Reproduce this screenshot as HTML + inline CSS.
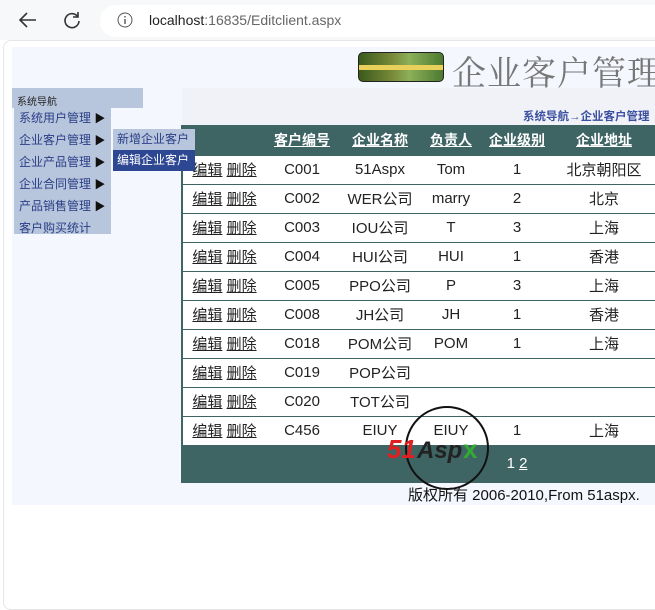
<!DOCTYPE html>
<html><head><meta charset="utf-8"><style>
*{margin:0;padding:0;box-sizing:border-box}
body{width:655px;height:603px;overflow:hidden;background:#fff;font-family:"Liberation Sans","Noto Sans CJK SC",sans-serif;position:relative}
.bar{position:absolute;left:0;top:0;width:655px;height:40px;background:#f7f8fa}
.url{position:absolute;left:100px;top:5px;width:570px;height:32px;border-radius:16px;background:#fff}
.frame{position:absolute;left:3px;top:40px;width:660px;height:570px;background:#fff;border:1px solid #e6e6e6;border-radius:8px}
.page{position:absolute;left:12px;top:47px;width:650px;height:458px;background:#f5f7fe}
.abs{position:absolute}
.nav{background:#b8c6dd;font-size:12px;color:#2a3e86;white-space:nowrap}
.z{z-index:5}
table{position:absolute;left:181px;top:125px;border-collapse:collapse;width:480px;background:#fff;border-left:2px solid #3f6464}
td,th{height:29px;text-align:center;font-size:15px;color:#222;border-bottom:1px solid #3f6464;white-space:nowrap}
th{background:#3f6464;color:#fff;text-decoration:underline;height:30px;font-size:14px}
td u{color:#222}
.ar{color:#111;font-size:11px}
</style></head><body>
<div class="bar">
<svg class="abs" style="left:18px;top:11px" width="20" height="18"><path d="M18 9H3M9 2L2 9l7 7" stroke="#333" stroke-width="1.6" fill="none"/></svg>
<svg class="abs" style="left:62px;top:10px" width="20" height="20"><path d="M16 7A7 7 0 1 0 17 11M16 2v5h-5" stroke="#333" stroke-width="1.6" fill="none"/></svg>
<div class="url"></div>
<svg class="abs" style="left:117px;top:12px" width="16" height="16"><circle cx="8" cy="8" r="7" stroke="#555" fill="none"/><path d="M8 7v5M8 4v1.5" stroke="#555" stroke-width="1.4"/></svg>
<div class="abs" style="left:149px;top:12px;font-size:14px;color:#222">localhost<span style="color:#666">:16835/Editclient.aspx</span></div>
</div>
<div class="frame"></div>
<div class="page"></div>
<div class="abs" style="left:358px;top:52px;width:86px;height:30px;border-radius:5px;background:linear-gradient(90deg,#3a5a1c,#7a8a3a 40%,#8cb05a 60%,#4d7a30);border:1px solid #222"><div style="position:absolute;left:0;top:12px;width:84px;height:5px;background:#e8d05a"></div></div>
<div class="abs" style="left:452px;top:46px;font-size:34px;color:#777;font-family:'Noto Serif CJK SC',serif;letter-spacing:1px;white-space:nowrap">企业客户管理</div>
<div class="abs" style="left:182px;top:88px;width:480px;height:37px;background:#f0f2f8"></div>
<div class="abs" style="left:523px;top:108px;font-size:11.5px;color:#3b4fa0;font-weight:bold;white-space:nowrap">系统导航→企业客户管理</div>
<div class="abs nav" style="left:12px;top:88px;width:131px;height:20px;font-size:10px;padding:5px 0 0 5px;color:#222">系统导航</div>
<div class="abs nav" style="left:14px;top:108px;width:97px;height:126px;line-height:21px;padding-left:5px;font-size:12px">系统用户管理 <span class="ar">▶</span><br>企业客户管理 <span class="ar">▶</span><br>企业产品管理 <span class="ar">▶</span><br>企业合同管理 <span class="ar">▶</span><br>产品销售管理 <span class="ar">▶</span><br>客户购买统计</div>
<div class="abs nav z" style="left:113px;top:129px;width:82px;height:21px;line-height:21px;padding-left:4px;font-size:12px">新增企业客户</div>
<div class="abs z" style="left:113px;top:150px;width:82px;height:21px;line-height:21px;padding-left:4px;font-size:12px;background:#2e4793;color:#fff;white-space:nowrap">编辑企业客户</div>
<table>
<tr><th style="width:84px"></th><th style="width:72px">客户编号</th><th style="width:84px">企业名称</th><th style="width:58px">负责人</th><th style="width:74px">企业级别</th><th style="width:100px">企业地址</th><th></th></tr>
<tr><td><u>编辑</u> <u>删除</u></td><td>C001</td><td>51Aspx</td><td>Tom</td><td>1</td><td>北京朝阳区</td><td></td></tr>
<tr><td><u>编辑</u> <u>删除</u></td><td>C002</td><td>WER公司</td><td>marry</td><td>2</td><td>北京</td><td></td></tr>
<tr><td><u>编辑</u> <u>删除</u></td><td>C003</td><td>IOU公司</td><td>T</td><td>3</td><td>上海</td><td></td></tr>
<tr><td><u>编辑</u> <u>删除</u></td><td>C004</td><td>HUI公司</td><td>HUI</td><td>1</td><td>香港</td><td></td></tr>
<tr><td><u>编辑</u> <u>删除</u></td><td>C005</td><td>PPO公司</td><td>P</td><td>3</td><td>上海</td><td></td></tr>
<tr><td><u>编辑</u> <u>删除</u></td><td>C008</td><td>JH公司</td><td>JH</td><td>1</td><td>香港</td><td></td></tr>
<tr><td><u>编辑</u> <u>删除</u></td><td>C018</td><td>POM公司</td><td>POM</td><td>1</td><td>上海</td><td></td></tr>
<tr><td><u>编辑</u> <u>删除</u></td><td>C019</td><td>POP公司</td><td></td><td></td><td></td><td></td></tr>
<tr><td><u>编辑</u> <u>删除</u></td><td>C020</td><td>TOT公司</td><td></td><td></td><td></td><td></td></tr>
<tr><td><u>编辑</u> <u>删除</u></td><td>C456</td><td>EIUY</td><td>EIUY</td><td>1</td><td>上海</td><td></td></tr>
<tr><td colspan="7" style="background:#3f6464;height:37px;color:#fff;padding-left:190px;text-align:center">1 <u style="color:#fff">2</u></td></tr>
</table>
<svg class="abs" style="left:385px;top:402px" width="130" height="92"><circle cx="62" cy="46" r="41" fill="none" stroke="#111" stroke-width="2"/>
<text x="2" y="56" font-size="26" font-weight="bold" font-style="italic" fill="#e02020" font-family="Liberation Sans">51</text>
<text x="32" y="56" font-size="24" font-weight="bold" font-style="italic" fill="#222" font-family="Liberation Sans">Asp</text>
<text x="78" y="56" font-size="26" font-weight="bold" fill="#3a3" font-family="Liberation Sans">x</text></svg>
<div class="abs" style="left:408px;top:484px;font-size:15px;color:#111;white-space:nowrap">版权所有 2006-2010,From 51aspx.</div>
</body></html>
